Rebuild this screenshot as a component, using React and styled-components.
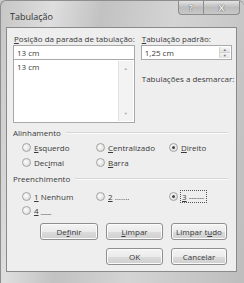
import React from 'react'
import styled, { createGlobalStyle } from 'styled-components'

const Global = createGlobalStyle`
    html, body {
        margin: 0;
        padding: 0;
        background: #c9c9c9;
    }
    body {
        font-family: "Open Sans", "Noto Sans", sans-serif;
    }
`

const Window = styled.div`
    width: 244px;
    height: 283px;
    box-sizing: border-box;
    display: flex;
    flex-direction: column;
    padding: 0 7px 11px 5px;
    background: linear-gradient(100deg, #c6c6c6 0%, #dedede 18%, #c2c2c2 35%, #d4d4d4 60%, #bdbdbd 100%);
    border-radius: 6px 6px 0 0;
    border: 1px solid #8e8e8e;
    border-bottom: none;
    border-right: none;
`

const TitleBar = styled.div`
    height: 26px;
    display: flex;
    align-items: flex-start;
    justify-content: space-between;
`

const Title = styled.div`
    font-size: 9px;
    color: #333;
    padding: 9px 0 0 4px;
`

const Caption = styled.div`
    display: flex;
    margin-right: -3px;
`

const CapButton = styled.div`
    width: ${p => p.w}px;
    height: 14px;
    box-sizing: border-box;
    border: 1px solid #8c8c8c;
    border-top: none;
    border-left: ${p => (p.first ? '1px solid #8c8c8c' : 'none')};
    border-radius: ${p => (p.first ? '0 0 0 4px' : '0 0 4px 0')};
    background: linear-gradient(#e4e4e4, #bcbcbc 50%, #c8c8c8);
    display: flex;
    align-items: center;
    justify-content: center;
    font-size: 9px;
    font-weight: bold;
    color: #f4f4f4;
    text-shadow: 0 0 1px #555, 0 0 1px #555;
`

const Client = styled.div`
    flex: 1;
    background: #eeeeee;
    border: 1px solid #8a8a8a;
    padding: 5px 5px 0 6px;
    display: flex;
    flex-direction: column;
    font-size: 8px;
    color: #3a3a3a;
`

const TopRow = styled.div`
    display: flex;
    gap: 6px;
`

const Column = styled.div`
    display: flex;
    flex-direction: column;
    width: ${p => p.w}px;
`

const Label = styled.div`
    height: 11px;
    line-height: 11px;
    margin-bottom: 1px;
    white-space: nowrap;
    margin-left: ${p => p.indent || 0}px;
    margin-top: ${p => p.top || 0}px;
`

const U = styled.span`
    text-decoration: underline;
`

const Input = styled.div`
    height: 15px;
    box-sizing: border-box;
    border: 1px solid #a9a9a9;
    background: #fff;
    display: flex;
    align-items: center;
    padding-left: 3px;
    position: relative;
`

const Spin = styled.div`
    position: absolute;
    right: 1px;
    top: 1px;
    bottom: 1px;
    width: 10px;
    display: flex;
    flex-direction: column;
    border-left: 1px solid #d4d4d4;
`

const SpinHalf = styled.div`
    flex: 1;
    display: flex;
    align-items: center;
    justify-content: center;
    background: linear-gradient(#f6f6f6, #e2e2e2);
    font-size: 4px;
    color: #777;
    & + & {
        border-top: 1px solid #d0d0d0;
    }
`

const List = styled.div`
    height: 63px;
    box-sizing: border-box;
    border: 1px solid #a9a9a9;
    border-top: none;
    background: #fff;
    display: flex;
`

const ListBody = styled.div`
    flex: 1;
    padding: 1px 0 0 3px;
`

const Scroll = styled.div`
    width: 14px;
    margin: 1px;
    background: #f3f3f3;
    border-left: 1px solid #e4e4e4;
    display: flex;
    flex-direction: column;
    justify-content: space-between;
    align-items: center;
    font-size: 4px;
    color: #aaa;
    padding: 5px 0;
`

const Group = styled.div`
    display: flex;
    align-items: center;
    gap: 5px;
    height: 11px;
    margin-top: ${p => p.top}px;
    margin-right: 3px;
    &::after {
        content: '';
        flex: 1;
        height: 1px;
        background: #d6d6d6;
        border-bottom: 1px solid #fafafa;
    }
`

const RadioGrid = styled.div`
    display: grid;
    grid-template-columns: 74px 73px 60px;
    grid-auto-rows: ${p => p.row}px;
    padding-left: 9px;
    margin-top: ${p => p.top}px;
`

const RadioItem = styled.div`
    display: flex;
    align-items: center;
    gap: 3px;
    white-space: nowrap;
`

const Dot = styled.span`
    width: 9px;
    height: 9px;
    flex: none;
    box-sizing: border-box;
    border-radius: 50%;
    border: 1px solid #a4a4a4;
    background: radial-gradient(circle at 40% 40%, #fdfdfd, #d4d4d4);
    display: flex;
    align-items: center;
    justify-content: center;
    &::after {
        content: '';
        display: ${p => (p.on ? 'block' : 'none')};
        width: 3px;
        height: 3px;
        border-radius: 50%;
        background: #444;
    }
`

const Focus = styled.span`
    outline: 1px dotted #555;
    padding: 0 2px 0 1px;
`

const Radio = ({ on, children }) => (
    <RadioItem>
        <Dot on={on ? 1 : 0} />
        <span>{children}</span>
    </RadioItem>
)

const ButtonRow = styled.div`
    display: flex;
    justify-content: flex-end;
    gap: 8px;
    padding-right: 4px;
    margin-top: ${p => p.top}px;
`

const Button = styled.div`
    width: ${p => p.w || 56}px;
    height: 17px;
    box-sizing: border-box;
    border: 1px solid #8f8f8f;
    border-radius: 3px;
    background: linear-gradient(#f4f4f4, #ebebeb 50%, #dcdcdc 51%, #cfcfcf);
    box-shadow: inset 0 0 0 1px #fbfbfb;
    display: flex;
    align-items: center;
    justify-content: center;
    color: #3a3a3a;
`

export default function App() {
    return (
        <>
            <Global />
            <Window>
                <TitleBar>
                    <Title>Tabulação</Title>
                    <Caption>
                        <CapButton w={26} first>?</CapButton>
                        <CapButton w={36}>X</CapButton>
                    </Caption>
                </TitleBar>
                <Client>
                    <TopRow>
                        <Column w={123}>
                            <Label indent={1}><U>P</U>osição da parada de tabulação:</Label>
                            <Input>13 cm</Input>
                            <List>
                                <ListBody>13 cm</ListBody>
                                <Scroll>
                                    <span>▲</span>
                                    <span>▼</span>
                                </Scroll>
                            </List>
                        </Column>
                        <Column w={91}>
                            <Label indent={1}><U>T</U>abulação padrão:</Label>
                            <Input>
                                1,25 cm
                                <Spin>
                                    <SpinHalf>▲</SpinHalf>
                                    <SpinHalf>▼</SpinHalf>
                                </Spin>
                            </Input>
                            <Label indent={1} top={13}>Tabulações a desmarcar:</Label>
                        </Column>
                    </TopRow>

                    <Group top={4}>Alinhamento</Group>
                    <RadioGrid top={2} row={15}>
                        <Radio><U>E</U>squerdo</Radio>
                        <Radio><U>C</U>entralizado</Radio>
                        <Radio on><U>D</U>ireito</Radio>
                        <Radio>Dec<U>i</U>mal</Radio>
                        <Radio><U>B</U>arra</Radio>
                    </RadioGrid>

                    <Group top={3}>Preenchimento</Group>
                    <RadioGrid top={5} row={14}>
                        <Radio><U>1</U> Nenhum</Radio>
                        <Radio><U>2</U> .......</Radio>
                        <Radio on><Focus><U>3</U> ------</Focus></Radio>
                        <Radio><U>4</U> ___</Radio>
                    </RadioGrid>

                    <ButtonRow top={6}>
                        <Button w={58}>De<U>f</U>inir</Button>
                        <Button w={57}><U>L</U>impar</Button>
                        <Button w={56}>Limpar t<U>u</U>do</Button>
                    </ButtonRow>
                    <ButtonRow top={8}>
                        <Button w={57}>OK</Button>
                        <Button w={56}>Cancelar</Button>
                    </ButtonRow>
                </Client>
            </Window>
        </>
    )
}
